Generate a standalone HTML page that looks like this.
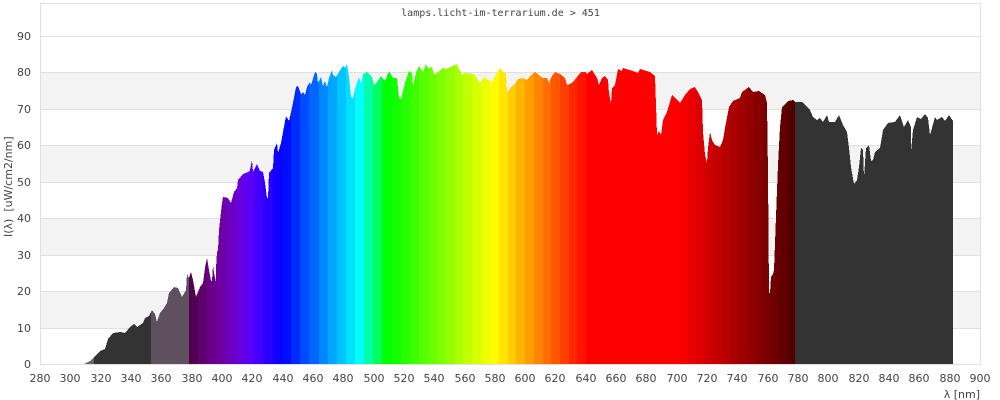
<!DOCTYPE html>
<html>
<head>
<meta charset="utf-8">
<title>lamps.licht-im-terrarium.de</title>
<style>
html,body{margin:0;padding:0;background:#fff;}
svg{display:block;}
text{font-family:"DejaVu Sans",sans-serif;font-size:11px;fill:#444;}
.t{font-family:"DejaVu Sans Mono",monospace;font-size:10px;}
</style>
</head>
<body>
<svg width="1000" height="400" viewBox="0 0 1000 400" xmlns="http://www.w3.org/2000/svg">
<defs>
<pattern id="strips" patternUnits="userSpaceOnUse" x="0" y="0" width="1000" height="400">
<g shape-rendering="crispEdges">
<rect x="84" y="0" width="10" height="400" fill="#666"/>
<rect x="94" y="0" width="57" height="400" fill="#333"/>
<rect x="151" y="0" width="38" height="400" fill="#5f5060"/>
<rect x="189" y="0" width="9" height="400" fill="#510052"/>
<rect x="198" y="0" width="9" height="400" fill="#60006d"/>
<rect x="207" y="0" width="10" height="400" fill="#6a0089"/>
<rect x="217" y="0" width="9" height="400" fill="#6e00a4"/>
<rect x="226" y="0" width="10" height="400" fill="#6d00c0"/>
<rect x="236" y="0" width="9" height="400" fill="#6600dc"/>
<rect x="245" y="0" width="9" height="400" fill="#5a00f8"/>
<rect x="254" y="0" width="9" height="400" fill="#4400ff"/>
<rect x="263" y="0" width="10" height="400" fill="#2900ff"/>
<rect x="273" y="0" width="9" height="400" fill="#0f00ff"/>
<rect x="282" y="0" width="9" height="400" fill="#000dff"/>
<rect x="291" y="0" width="9" height="400" fill="#002bff"/>
<rect x="300" y="0" width="9" height="400" fill="#004aff"/>
<rect x="309" y="0" width="10" height="400" fill="#0066ff"/>
<rect x="319" y="0" width="9" height="400" fill="#0088ff"/>
<rect x="328" y="0" width="9" height="400" fill="#00a6ff"/>
<rect x="337" y="0" width="9" height="400" fill="#00c4ff"/>
<rect x="346" y="0" width="9" height="400" fill="#00e1ff"/>
<rect x="355" y="0" width="9" height="400" fill="#00ffff"/>
<rect x="364" y="0" width="9" height="400" fill="#00ffa9"/>
<rect x="373" y="0" width="9" height="400" fill="#00ff5e"/>
<rect x="382" y="0" width="10" height="400" fill="#00ff00"/>
<rect x="392" y="0" width="9" height="400" fill="#12ff00"/>
<rect x="401" y="0" width="9" height="400" fill="#28ff00"/>
<rect x="410" y="0" width="9" height="400" fill="#3eff00"/>
<rect x="419" y="0" width="9" height="400" fill="#54ff00"/>
<rect x="428" y="0" width="9" height="400" fill="#6aff00"/>
<rect x="437" y="0" width="9" height="400" fill="#7fff00"/>
<rect x="446" y="0" width="9" height="400" fill="#95ff00"/>
<rect x="455" y="0" width="8" height="400" fill="#abff00"/>
<rect x="463" y="0" width="9" height="400" fill="#c1ff00"/>
<rect x="472" y="0" width="9" height="400" fill="#d7ff00"/>
<rect x="481" y="0" width="9" height="400" fill="#edff00"/>
<rect x="490" y="0" width="9" height="400" fill="#fffb00"/>
<rect x="499" y="0" width="9" height="400" fill="#ffe500"/>
<rect x="508" y="0" width="8" height="400" fill="#ffcc00"/>
<rect x="516" y="0" width="9" height="400" fill="#ffb400"/>
<rect x="525" y="0" width="9" height="400" fill="#ff9d00"/>
<rect x="534" y="0" width="9" height="400" fill="#ff8500"/>
<rect x="543" y="0" width="8" height="400" fill="#ff6e00"/>
<rect x="551" y="0" width="9" height="400" fill="#ff5600"/>
<rect x="560" y="0" width="9" height="400" fill="#ff3f00"/>
<rect x="569" y="0" width="8" height="400" fill="#ff2700"/>
<rect x="577" y="0" width="9" height="400" fill="#ff1400"/>
<rect x="586" y="0" width="94" height="400" fill="#ff0000"/>
<rect x="680" y="0" width="8" height="400" fill="#f60000"/>
<rect x="688" y="0" width="8" height="400" fill="#e90000"/>
<rect x="696" y="0" width="9" height="400" fill="#dc0000"/>
<rect x="705" y="0" width="8" height="400" fill="#d00000"/>
<rect x="713" y="0" width="9" height="400" fill="#c30000"/>
<rect x="722" y="0" width="8" height="400" fill="#b70000"/>
<rect x="730" y="0" width="8" height="400" fill="#aa0000"/>
<rect x="738" y="0" width="8" height="400" fill="#9e0000"/>
<rect x="746" y="0" width="8" height="400" fill="#920000"/>
<rect x="754" y="0" width="9" height="400" fill="#870000"/>
<rect x="763" y="0" width="8" height="400" fill="#790000"/>
<rect x="771" y="0" width="8" height="400" fill="#6d0000"/>
<rect x="779" y="0" width="8" height="400" fill="#610000"/>
<rect x="787" y="0" width="8" height="400" fill="#550000"/>
<rect x="795" y="0" width="158" height="400" fill="#333"/>
</g>
</pattern>
</defs>
<rect width="1000" height="400" fill="#fff"/>
<g fill="#f3f3f3">
<rect x="41" y="73" width="939" height="36"/>
<rect x="41" y="146" width="939" height="36"/>
<rect x="41" y="219" width="939" height="36"/>
<rect x="41" y="292" width="939" height="36"/>
</g>
<g fill="#e0e0e0">
<rect x="40" y="3" width="941" height="1"/>
<rect x="40" y="36" width="941" height="1"/>
<rect x="40" y="72" width="941" height="1"/>
<rect x="40" y="109" width="941" height="1"/>
<rect x="40" y="145" width="941" height="1"/>
<rect x="40" y="182" width="941" height="1"/>
<rect x="40" y="218" width="941" height="1"/>
<rect x="40" y="255" width="941" height="1"/>
<rect x="40" y="291" width="941" height="1"/>
<rect x="40" y="328" width="941" height="1"/>
<rect x="40" y="364" width="941" height="1"/>
<rect x="40" y="3" width="1" height="362"/>
<rect x="980" y="3" width="1" height="362"/>
</g>
<polygon fill="url(#strips)" shape-rendering="crispEdges" points="84,364 90,361 94,357 100,351 105,349 108,339 113,333 120,332 125,333 130,327 134,324 137,327 143,323 145,318 149,316 152,310 155,314 157,322 160,313 164,308 167,303 169,293 174,287 178,288 182,297 186,290 187,274 189,278 191,272 193,280 196,297 200,287 203,283 205,268 207,258 209,270 211,281 212,281 213,265 214,273 216,282 216,268 217,252 218,250 219,230 222,203 223,197 228,198 231,203 234,192 237,188 238,180 243,174 248,172 250,170 252,160 253,172 257,164 260,171 263,172 265,183 267,198 268,198 269,173 273,168 274,150 277,143 278,153 281,143 283,132 286,116 289,121 293,103 296,87 298,86 301,94 303,92 305,95 307,87 310,82 311,85 315,72 317,74 318,83 321,77 323,86 325,81 327,87 329,78 332,70 333,75 336,77 339,72 343,66 345,68 347,64 349,77 351,97 353,99 355,89 359,77 361,83 363,74 367,72 372,77 374,85 377,82 381,76 385,81 389,71 393,78 397,78 399,98 401,99 405,83 409,71 412,73 413,86 416,73 419,66 423,72 426,64 428,68 432,67 434,75 438,72 443,68 446,69 457,64 462,75 465,73 472,74 474,74 480,83 484,77 490,81 492,83 495,76 500,68 502,71 506,73 507,93 512,86 515,84 518,79 523,78 527,80 532,74 535,72 540,76 543,78 547,78 549,83 552,76 555,72 560,74 565,78 567,85 572,83 577,77 581,72 585,72 587,74 592,70 597,78 599,85 602,78 605,76 608,80 609,93 611,104 612,88 615,85 618,69 622,71 623,68 633,71 638,73 640,69 650,72 655,76 656,105 657,135 659,131 661,135 663,120 667,112 672,95 677,100 680,103 685,95 690,89 695,87 698,92 702,100 703,132 705,155 707,163 708,148 710,132 712,140 715,145 720,147 723,140 725,128 729,107 733,101 740,98 742,92 749,87 753,92 759,91 765,95 767,103 768,174 769,293 770,293 771,277 773,274 774,270 777,190 778,165 780,127 782,107 788,101 793,100 795,102 802,102 806,106 810,110 813,117 817,120 820,118 823,122 827,115 829,122 835,122 839,115 843,125 847,132 849,148 851,167 854,184 857,180 859,167 861,148 863,150 864,178 866,148 869,145 871,161 873,160 875,152 880,148 883,130 888,123 895,122 900,115 904,127 908,120 911,127 911,152 913,130 917,117 921,119 925,114 928,118 930,135 932,128 935,117 937,120 942,117 945,121 949,115 953,121 953,364"/>
<text class="t" x="500.5" y="16" text-anchor="middle">lamps.licht-im-terrarium.de &gt; 451</text>
<g text-anchor="end">
<text x="31" y="40">90</text>
<text x="31" y="76">80</text>
<text x="31" y="113">70</text>
<text x="31" y="149">60</text>
<text x="31" y="186">50</text>
<text x="31" y="222">40</text>
<text x="31" y="259">30</text>
<text x="31" y="295">20</text>
<text x="31" y="332">10</text>
<text x="31" y="368">0</text>
</g>
<g text-anchor="middle">
<text x="40" y="382">280</text>
<text x="70" y="382">300</text>
<text x="101" y="382">320</text>
<text x="131" y="382">340</text>
<text x="161" y="382">360</text>
<text x="192" y="382">380</text>
<text x="222" y="382">400</text>
<text x="252" y="382">420</text>
<text x="283" y="382">440</text>
<text x="313" y="382">460</text>
<text x="343" y="382">480</text>
<text x="374" y="382">500</text>
<text x="404" y="382">520</text>
<text x="434" y="382">540</text>
<text x="465" y="382">560</text>
<text x="495" y="382">580</text>
<text x="525" y="382">600</text>
<text x="555" y="382">620</text>
<text x="586" y="382">640</text>
<text x="616" y="382">660</text>
<text x="646" y="382">680</text>
<text x="677" y="382">700</text>
<text x="707" y="382">720</text>
<text x="737" y="382">740</text>
<text x="768" y="382">760</text>
<text x="798" y="382">780</text>
<text x="828" y="382">800</text>
<text x="859" y="382">820</text>
<text x="889" y="382">840</text>
<text x="919" y="382">860</text>
<text x="950" y="382">880</text>
<text x="980" y="382">900</text>
</g>
<text x="980" y="398" text-anchor="end">λ [nm]</text>
<text transform="translate(12,237) rotate(-90)" xml:space="preserve" style="white-space:pre">I(λ)  [uW/cm2/nm]</text>
</svg>
</body>
</html>
